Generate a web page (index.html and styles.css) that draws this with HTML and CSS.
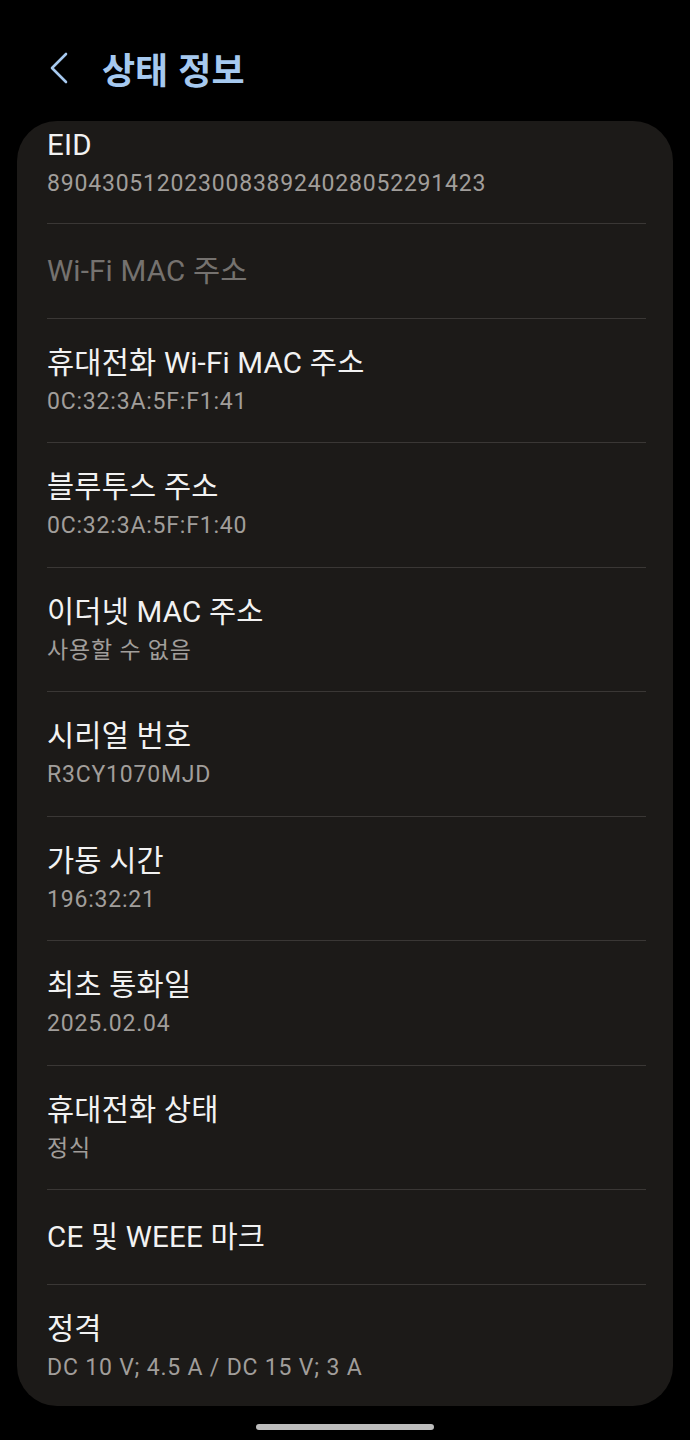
FILE: index.html
```html
<!DOCTYPE html>
<html lang="ko">
<head>
    <meta charset="UTF-8">
    <meta name="viewport" content="width=device-width, initial-scale=1.0">
    <title>상태 정보</title>
    <link rel="stylesheet" href="styles.css">
</head>
<body>
    <div class="screen">
        <header class="top-bar">
            <span class="back">
                <svg width="22" height="34" viewBox="0 0 22 34">
                    <path d="M18 3 L4 17 L18 31" fill="none" stroke="#a6c9ef" stroke-width="2.6" stroke-linecap="round" stroke-linejoin="round"/>
                </svg>
            </span>
            <h1>상태 정보</h1>
        </header>

        <div class="card">
            <div class="row first">
                <div class="title">EID</div>
                <div class="sub">89043051202300838924028052291423</div>
            </div>
            <div class="row single">
                <div class="title disabled">Wi-Fi MAC 주소</div>
            </div>
            <div class="row">
                <div class="title">휴대전화 Wi-Fi MAC 주소</div>
                <div class="sub">0C:32:3A:5F:F1:41</div>
            </div>
            <div class="row">
                <div class="title">블루투스 주소</div>
                <div class="sub">0C:32:3A:5F:F1:40</div>
            </div>
            <div class="row">
                <div class="title">이더넷 MAC 주소</div>
                <div class="sub">사용할 수 없음</div>
            </div>
            <div class="row">
                <div class="title">시리얼 번호</div>
                <div class="sub">R3CY1070MJD</div>
            </div>
            <div class="row">
                <div class="title">가동 시간</div>
                <div class="sub">196:32:21</div>
            </div>
            <div class="row">
                <div class="title">최초 통화일</div>
                <div class="sub">2025.02.04</div>
            </div>
            <div class="row">
                <div class="title">휴대전화 상태</div>
                <div class="sub">정식</div>
            </div>
            <div class="row single">
                <div class="title">CE 및 WEEE 마크</div>
            </div>
            <div class="row last">
                <div class="title">정격</div>
                <div class="sub">DC 10 V; 4.5 A / DC 15 V; 3 A</div>
            </div>
        </div>

        <div class="home-bar"></div>
    </div>
</body>
</html>
```

FILE: styles.css
```css
body {
    margin: 0;
    padding: 0;
    background: #000;
    font-family: Roboto, "Noto Sans CJK KR", sans-serif;
    color: #f2f2f2;
}
.screen {
    width: 690px;
    height: 1440px;
    display: flex;
    flex-direction: column;
    align-items: center;
}
.top-bar {
    width: 100%;
    box-sizing: border-box;
    height: 121px;
    display: flex;
    align-items: flex-start;
    padding: 51px 0 0 48px;
}
.back {
    display: flex;
    width: 54px;
}
.top-bar h1 {
    margin: 0;
    font-family: "Noto Sans CJK KR", sans-serif;
    font-size: 36px;
    font-weight: 700;
    line-height: 34px;
    color: #a6c9ef;
}
.card {
    width: 656px;
    box-sizing: border-box;
    background: #1c1a18;
    border-radius: 40px;
    padding: 0 27px 0 30px;
}
.row {
    padding: 27px 0 26.5px;
    border-bottom: 1.5px solid #3a3735;
}
.row.first {
    padding-top: 7px;
    padding-bottom: 25px;
}
.row.single {
    padding: 30px 0 29.5px;
}
.row.last {
    border-bottom: none;
    padding-bottom: 24px;
}
.title {
    font-size: 29.5px;
    line-height: 34px;
    letter-spacing: 0.2px;
}
.title.disabled {
    color: #75726f;
}
.sub {
    margin-top: 8px;
    font-size: 23px;
    line-height: 28px;
    color: #a19e9b;
    letter-spacing: 1px;
}
.sub:last-child {
    letter-spacing: 0.8px;
}
.home-bar {
    margin-top: 18px;
    width: 178px;
    height: 6px;
    border-radius: 3px;
    background: #bdbdbd;
}
```
